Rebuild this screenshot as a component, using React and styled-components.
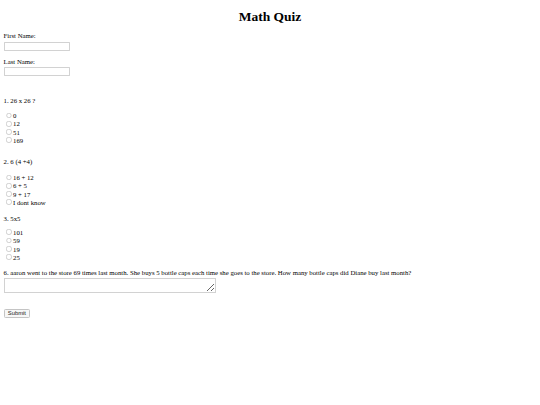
import React from 'react';
import styled, { createGlobalStyle } from 'styled-components';

const GlobalStyle = createGlobalStyle`
  html, body {
    margin: 0;
    padding: 0;
    background: #ffffff;
  }
`;

export const Page = styled.form`
  zoom: 0.45;
  padding: 0 8px;
  font-family: "Liberation Serif", "Times New Roman", serif;
  font-size: 15px;
  line-height: 18.4px;
  color: #000;
`;

export const Title = styled.h1`
  text-align: center;
  font-size: 30px;
  line-height: 37px;
  font-weight: bold;
  margin: 21px 0 14px;
`;

export const Field = styled.div`
  margin-bottom: ${(p) => p.$gap || 15}px;
`;

export const FieldLabel = styled.label`
  display: block;
`;

export const TextInput = styled.input`
  display: block;
  width: 147px;
  height: 21px;
  box-sizing: border-box;
  margin-top: 2px;
  font-size: 13px;
  border: 2px solid #d2d2d2;
  border-radius: 1px;
  background: #fff;
`;

export const Question = styled.div`
  margin-bottom: ${(p) => p.$gap || 15}px;
`;

export const Prompt = styled.p`
  margin: 0 0 ${(p) => p.$gap || 15}px;
`;

export const Option = styled.label`
  display: block;
  height: 18.4px;
  line-height: 18.4px;

  input {
    margin: 3px 3px 0 5px;
    vertical-align: -1px;
    accent-color: #888;
    opacity: 0.7;
  }
`;

export const Answer = styled.textarea`
  display: block;
  width: 471px;
  height: 33px;
  box-sizing: border-box;
  margin-top: 2px;
  border: 2px solid #d2d2d2;
  background: #fff;
  resize: both;
`;

export const SubmitButton = styled.button`
  margin-top: 20px;
  font-family: Arial, "Liberation Sans", sans-serif;
  font-size: 13px;
  height: 21px;
  padding: 1px 7px;
  color: #222;
  background: #f7f7f7;
  border: 2px solid #c4c4c4;
  border-radius: 3px;
`;

const questions = [
  { id: 'q1', text: '1. 26 x 26 ?', options: ['0', '12', '51', '169'], gap: 31, promptGap: 13 },
  { id: 'q2', text: '2. 6 (4 +4)', options: ['16 + 12', '6 + 5', '9 + 17', 'I dont know'], gap: 19, promptGap: 15 },
  { id: 'q3', text: '3. 5x5', options: ['101', '59', '19', '25'], gap: 17, promptGap: 11 },
];

export default function App() {
  return (
    <>
      <GlobalStyle />
      <Page onSubmit={(e) => e.preventDefault()}>
        <Title>Math Quiz</Title>

        <Field>
          <FieldLabel htmlFor="first">First Name:</FieldLabel>
          <TextInput id="first" type="text" />
        </Field>
        <Field $gap={46}>
          <FieldLabel htmlFor="last">Last Name:</FieldLabel>
          <TextInput id="last" type="text" />
        </Field>

        {questions.map(({ id, text, options, gap, promptGap }) => (
          <Question key={id} $gap={gap}>
            <Prompt $gap={promptGap}>{text}</Prompt>
            {options.map((opt) => (
              <Option key={opt}>
                <input type="radio" name={id} value={opt} />
                {opt}
              </Option>
            ))}
          </Question>
        ))}

        <Question $gap={0}>
          <FieldLabel htmlFor="q6">
            6. aaron went to the store 69 times last month. She buys 5 bottle caps each time she goes to the store. How many bottle caps did Diane buy last month?
          </FieldLabel>
          <Answer id="q6" />
        </Question>

        <SubmitButton type="submit">Submit</SubmitButton>
      </Page>
    </>
  );
}
